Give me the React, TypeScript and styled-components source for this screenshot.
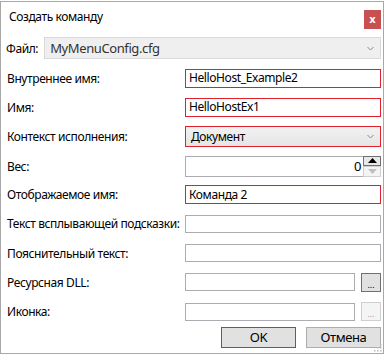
import styled, { createGlobalStyle } from "styled-components";

const Global = createGlobalStyle`
  html, body { margin: 0; padding: 0; background: #ffffff; }
  body {
    font-family: "Segoe UI", "Noto Sans", sans-serif;
    font-size: 12px;
    letter-spacing: -0.4px;
    color: #000;
  }
`;

const Window = styled.div`
  box-sizing: border-box;
  width: 384px;
  height: 353px;
  margin-top: 1px;
  border: 1px solid #a8a8a8;
  background: #fff;
  display: flex;
  flex-direction: column;
  position: relative;
`;

const TitleBar = styled.div`
  height: 30px;
  display: flex;
  align-items: flex-start;
  justify-content: space-between;
`;

const Title = styled.div`
  padding: 6px 0 0 8px;
  font-size: 12px;
`;

const CloseBtn = styled.div`
  width: 17px;
  height: 19px;
  margin: 8px 2px 0 0;
  background: #c75050;
  color: #fff;
  font-weight: bold;
  font-size: 10px;
  display: flex;
  align-items: center;
  justify-content: center;
  font-family: "DejaVu Sans", sans-serif;
  letter-spacing: 0;
`;

const FileRow = styled.div`
  display: flex;
  align-items: center;
  padding: 5px 2px 0 5px;
  gap: 6px;
`;

const Fields = styled.div`
  display: flex;
  flex-direction: column;
  gap: 9.2px;
  padding: 9px 2px 0 6px;
`;

const Row = styled.div`
  display: grid;
  grid-template-columns: 178px 1fr;
  align-items: center;
  height: 20px;
`;

const Label = styled.div`
  white-space: nowrap;
`;

const Input = styled.div<{ $invalid?: boolean }>`
  box-sizing: border-box;
  height: ${(p) => (p.$invalid ? "19px" : "18px")};
  border: 1px solid ${(p) => (p.$invalid ? "#e0202a" : "#abadb3")};
  background: #fff;
  padding: 0 3px;
  display: flex;
  align-items: center;
  flex: 1;
  line-height: 1;
`;

const Combo = styled.div<{ $invalid?: boolean; $disabled?: boolean }>`
  box-sizing: border-box;
  height: ${(p) => (p.$disabled ? "22px" : "21px")};
  flex: 1;
  border: 1px solid ${(p) => (p.$invalid ? "#e0202a" : "#d9d9d9")};
  background: ${(p) =>
    p.$disabled ? "#efefef" : "linear-gradient(#f2f2f2, #e5e5e5)"};
  color: ${(p) => (p.$disabled ? "#333" : "#000")};
  display: flex;
  align-items: center;
  justify-content: space-between;
  padding: 0 6px 0 5px;
  font-size: ${(p) => (p.$disabled ? "13px" : "12px")};
`;

const Chevron = () => (
  <svg width="7" height="5" viewBox="0 0 7 5">
    <path d="M0.5 1 L3.5 4 L6.5 1" fill="none" stroke="#8a8a8a" strokeWidth="1" />
  </svg>
);

const Pair = styled.div`
  display: flex;
  align-items: center;
  gap: 6px;
`;

const DotsBtn = styled.div<{ $disabled?: boolean }>`
  box-sizing: border-box;
  width: 20px;
  height: 19px;
  border: 1px solid ${(p) => (p.$disabled ? "#cfcfcf" : "#707070")};
  background: ${(p) => (p.$disabled ? "#f4f4f4" : "#e1e1e1")};
  color: ${(p) => (p.$disabled ? "#a0a0a0" : "#000")};
  font-size: 9px;
  letter-spacing: 0;
  display: flex;
  align-items: flex-end;
  justify-content: center;
  line-height: 12px;
`;

const Spin = styled.div`
  display: flex;
  height: 21px;
  align-items: stretch;
`;

const SpinField = styled.div`
  box-sizing: border-box;
  flex: 1;
  border: 1px solid #abadb3;
  border-right: none;
  display: flex;
  align-items: center;
  justify-content: flex-end;
  padding-right: 2px;
  font-size: 13px;
`;

const SpinButtons = styled.div`
  width: 18px;
  display: flex;
  flex-direction: column;
`;

const SpinBtn = styled.div<{ $disabled?: boolean }>`
  flex: 1;
  box-sizing: border-box;
  border: 1px solid ${(p) => (p.$disabled ? "#d0d0d0" : "#707070")};
  background: ${(p) => (p.$disabled ? "#f4f4f4" : "#e8e8e8")};
  display: flex;
  align-items: center;
  justify-content: center;
`;

const Buttons = styled.div`
  display: flex;
  justify-content: flex-end;
  gap: 10px;
  padding: 5px 2px 0 0;
`;

const Button = styled.div<{ $default?: boolean }>`
  box-sizing: border-box;
  width: 75px;
  height: 21px;
  border: 1px solid ${(p) => (p.$default ? "#0078d7" : "#adadad")};
  background: #e1e1e1;
  display: flex;
  align-items: center;
  justify-content: center;
  font-size: 13px;
`;

const Grip = styled.svg`
  position: absolute;
  right: 1px;
  bottom: 1px;
`;

export default function App() {
  return (
    <>
      <Global />
      <Window>
        <TitleBar>
          <Title>Создать команду</Title>
          <CloseBtn>x</CloseBtn>
        </TitleBar>
        <FileRow>
          <Label>Файл:</Label>
          <Combo $disabled>
            <span>MyMenuConfig.cfg</span>
            <Chevron />
          </Combo>
        </FileRow>
        <Fields>
          <Row>
            <Label>Внутреннее имя:</Label>
            <Input $invalid>HelloHost_Example2</Input>
          </Row>
          <Row>
            <Label>Имя:</Label>
            <Input $invalid>HelloHostEx1</Input>
          </Row>
          <Row>
            <Label>Контекст исполнения:</Label>
            <Combo $invalid>
              <span>Документ</span>
              <Chevron />
            </Combo>
          </Row>
          <Row>
            <Label>Вес:</Label>
            <Spin>
              <SpinField>0</SpinField>
              <SpinButtons>
                <SpinBtn>
                  <svg width="9" height="5" viewBox="0 0 9 5">
                    <path d="M0 5 L4.5 0 L9 5 Z" fill="#000" />
                  </svg>
                </SpinBtn>
                <SpinBtn $disabled>
                  <svg width="9" height="5" viewBox="0 0 9 5">
                    <path d="M0 0 L4.5 5 L9 0 Z" fill="#bfbfbf" />
                  </svg>
                </SpinBtn>
              </SpinButtons>
            </Spin>
          </Row>
          <Row>
            <Label>Отображаемое имя:</Label>
            <Input $invalid>Команда 2</Input>
          </Row>
          <Row>
            <Label>Текст всплывающей подсказки:</Label>
            <Input />
          </Row>
          <Row>
            <Label>Пояснительный текст:</Label>
            <Input />
          </Row>
          <Row>
            <Label>Ресурсная DLL:</Label>
            <Pair>
              <Input />
              <DotsBtn>...</DotsBtn>
            </Pair>
          </Row>
          <Row>
            <Label>Иконка:</Label>
            <Pair>
              <Input />
              <DotsBtn $disabled>...</DotsBtn>
            </Pair>
          </Row>
        </Fields>
        <Buttons>
          <Button $default>OK</Button>
          <Button>Отмена</Button>
        </Buttons>
        <Grip width="10" height="10" viewBox="0 0 10 10">
          {[
            [8, 2], [8, 5], [8, 8], [5, 5], [5, 8], [2, 8],
          ].map(([x, y], i) => (
            <rect key={i} x={x} y={y} width="1.5" height="1.5" fill="#b8b8b8" />
          ))}
        </Grip>
      </Window>
    </>
  );
}
